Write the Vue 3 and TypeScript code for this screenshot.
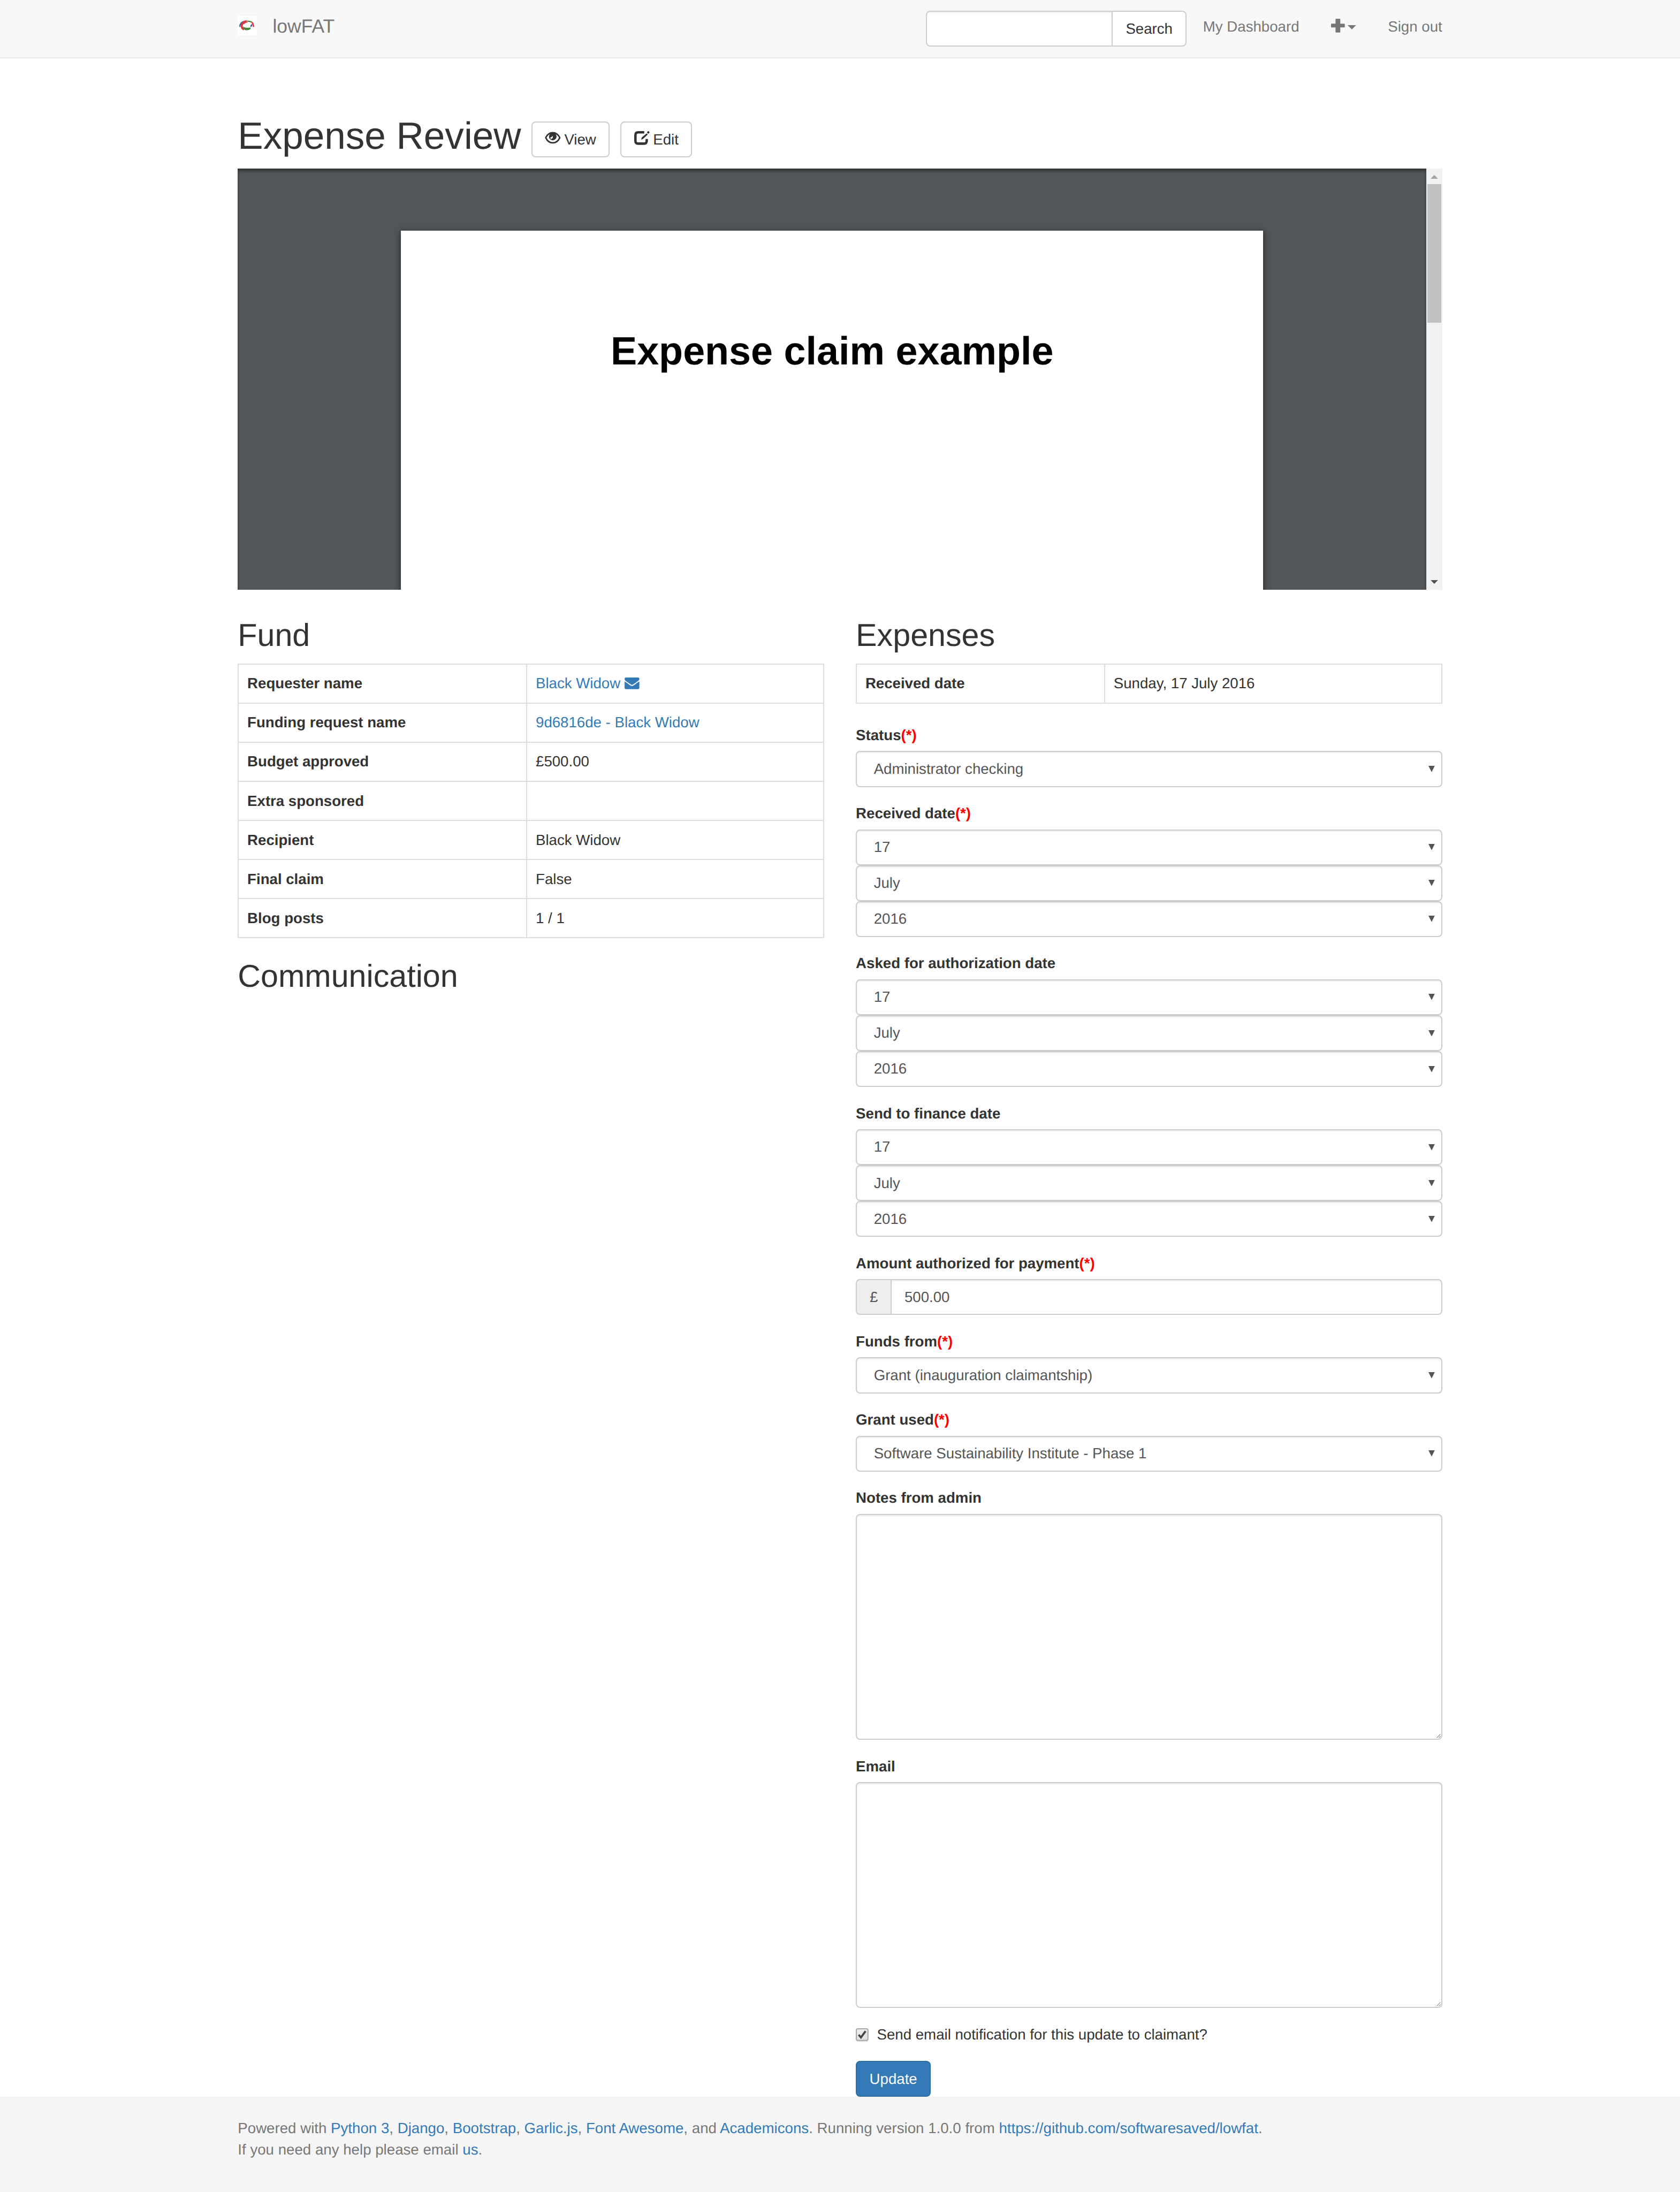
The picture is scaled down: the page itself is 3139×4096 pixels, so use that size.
<script setup lang="ts">
interface FundRow {
  label: string
  value: string
  link?: boolean
  mail?: boolean
}

interface Field {
  label: string
  required?: boolean
  kind: 'select' | 'money' | 'textarea'
  values: string[]
}

const fundRows: FundRow[] = [
  { label: 'Requester name', value: 'Black Widow', link: true, mail: true },
  { label: 'Funding request name', value: '9d6816de - Black Widow', link: true },
  { label: 'Budget approved', value: '£500.00' },
  { label: 'Extra sponsored', value: '' },
  { label: 'Recipient', value: 'Black Widow' },
  { label: 'Final claim', value: 'False' },
  { label: 'Blog posts', value: '1 / 1' },
]

const dateParts = ['17', 'July', '2016']

const fields: Field[] = [
  { label: 'Status', required: true, kind: 'select', values: ['Administrator checking'] },
  { label: 'Received date', required: true, kind: 'select', values: dateParts },
  { label: 'Asked for authorization date', kind: 'select', values: dateParts },
  { label: 'Send to finance date', kind: 'select', values: dateParts },
  { label: 'Amount authorized for payment', required: true, kind: 'money', values: ['500.00'] },
  { label: 'Funds from', required: true, kind: 'select', values: ['Grant (inauguration claimantship)'] },
  { label: 'Grant used', required: true, kind: 'select', values: ['Software Sustainability Institute - Phase 1'] },
  { label: 'Notes from admin', kind: 'textarea', values: [''] },
  { label: 'Email', kind: 'textarea', values: [''] },
]
</script>

<template>
  <div class="page">
    <nav class="navbar">
      <div class="container bar">
        <a class="brand">
          <svg class="logo" viewBox="0 0 36 36">
            <rect width="36" height="36" fill="#fff" />
            <g fill="none">
              <path d="M4.2 20.5C4 15 7.500 11 14 9.800" stroke="#2d5d9b" stroke-width="2.200" />
              <path d="M12 25.500C5 22 6 11.500 17.500 9.800" stroke="#d9343b" stroke-width="4" />
              <path d="M11.500 15.500Q14 11.800 19 11.800" stroke="#e8484c" stroke-width="1.200" />
              <path d="M18 9.800Q23 9.300 26.500 11.500" stroke="#3c8a3f" stroke-width="2.400" />
              <path d="M26.500 11.500Q30 14 30 20.500" stroke="#e8393d" stroke-width="2.800" />
              <path d="M26.800 15.500Q27 18 24.500 20" stroke="#1f5796" stroke-width="2.600" />
            </g>
            <path d="M10 19.500Q13 22.500 18 22.300L25 21.700Q24.500 26.500 18 26.800Q13 26.800 12 24.500Z" fill="#3f8a3c" />
          </svg>
          <span class="brand-name">lowFAT</span>
        </a>
        <form class="search">
          <span class="search-input"></span>
          <span class="search-button">Search</span>
        </form>
        <a class="dash">My Dashboard</a>
        <a class="add">
          <svg class="plus" viewBox="0 0 26 26">
            <path d="M9.500 0h7q1 0 1 1v8.500h7.500q1 0 1 1v5q0 1-1 1h-7.500v8.500q0 1-1 1h-7q-1 0-1-1v-8.500h-7.500q-1 0-1-1v-5q0-1 1-1h7.500v-8.500q0-1 1-1z" fill="#777" />
          </svg>
          <svg class="caret" viewBox="0 0 16 8"><path d="M0 0h16l-8 8z" fill="#777" /></svg>
        </a>
        <a>Sign out</a>
      </div>
    </nav>

    <main class="container main">
      <header class="title">
        <h1>Expense Review</h1>
        <a class="btn view">
          <svg viewBox="0 0 30 23">
            <path d="M15 1.800C8.500 1.800 4.300 6 1.700 11.500C4.300 17 8.500 21.200 15 21.200S25.700 17 28.300 11.500C25.700 6 21.500 1.800 15 1.800Z" fill="none" stroke="#333" stroke-width="2.800" stroke-linejoin="round" />
            <circle cx="15" cy="9.200" r="7.200" fill="#333" />
            <path d="M14.500 7.500Q16.500 12.500 12.500 14Q10 13.500 10 11Q13 12 14.500 7.500Z" fill="#fff" />
          </svg>
          View
        </a>
        <a class="btn edit">
          <svg viewBox="0 0 29 27">
            <path d="M19 2.300H7.500Q2.300 2.300 2.300 7.500V18.500Q2.300 23.700 7.500 23.700H18.500Q23.700 23.700 23.700 18.500V15" fill="none" stroke="#333" stroke-width="4.600" />
            <path d="M12 17.500L14 11.500L23.500 3.500L26.500 6.500L17.500 15Z" fill="#333" stroke="#fff" stroke-width="1.200" />
            <path d="M24 2.500L26 .3Q27 -.3 28.300 1Q29.300 2.300 28.500 3.200L26.500 5Z" fill="#333" />
          </svg>
          Edit
        </a>
      </header>

      <section class="viewer">
        <div class="canvas">
          <div class="sheet">Expense claim example</div>
        </div>
        <div class="scroll">
          <svg viewBox="0 0 14 7"><path d="M0 7h14l-7-7z" fill="#a3a3a3" /></svg>
          <div class="thumb"></div>
          <svg class="down" viewBox="0 0 14 7"><path d="M0 0h14l-7 7z" fill="#505050" /></svg>
        </div>
      </section>

      <div class="columns">
        <section class="col">
          <h2>Fund</h2>
          <div class="table fund">
            <div v-for="row in fundRows" :key="row.label" class="row">
              <div class="th">{{ row.label }}</div>
              <div class="td">
                <a v-if="row.link">{{ row.value }}</a>
                <template v-else>{{ row.value }}</template>
                <svg v-if="row.mail" class="mail" viewBox="0 256 1792 1408">
                  <path fill="#337ab7" d="M1792 710v794q0 66-47 113t-113 47h-1472q-66 0-113-47t-47-113v-794q44 49 101 87 362 246 497 345 57 42 92.500 65.500t94.500 48 110 24.500h2q51 0 110-24.500t94.500-48 92.500-65.500q170-123 498-345 57-39 100-87zm0-294q0 79-49 151t-122 123q-376 261-468 325-10 7-42.500 31t-54 38.500-52 32.500-57.500 27-50 9h-2q-23 0-50-9t-57.500-27-52-32.500-54-38.500-42.500-31q-91-64-262-182.500t-205-142.500q-62-42-117-115.500t-55-136.500q0-78 41.500-130t118.500-52h1472q65 0 112.500 47t47.500 113z" />
                </svg>
              </div>
            </div>
          </div>
          <h2>Communication</h2>
        </section>

        <section class="col">
          <h2>Expenses</h2>
          <div class="table received">
            <div class="row">
              <div class="th">Received date</div>
              <div class="td">Sunday, 17 July 2016</div>
            </div>
          </div>

          <div v-for="field in fields" :key="field.label" class="group">
            <div class="label">{{ field.label }}<span v-if="field.required" class="req">(*)</span></div>
            <template v-if="field.kind === 'select'">
              <div v-for="value in field.values" :key="value" class="control select">
                <span>{{ value }}</span>
                <svg viewBox="0 0 12 12"><path d="M0 0h12l-6 12z" fill="#555" /></svg>
              </div>
            </template>
            <div v-else-if="field.kind === 'money'" class="money">
              <span class="addon">£</span>
              <div class="control amount">{{ field.values[0] }}</div>
            </div>
            <div v-else class="control area">
              <svg viewBox="0 0 8 8">
                <path d="M.5 7.500L7.500 .5M4.500 7.500L7.500 4.500" stroke="#555" stroke-width="1" fill="none" />
              </svg>
            </div>
          </div>

          <div class="notify">
            <svg viewBox="0 0 24 26">
              <defs>
                <linearGradient id="boxfill" x1="0" y1="0" x2="0" y2="1">
                  <stop offset="0" stop-color="#ededed" />
                  <stop offset="1" stop-color="#dedede" />
                </linearGradient>
              </defs>
              <rect x="0" y="2" width="24" height="24" rx="4" fill="#e9e9e9" />
              <rect x="1" y="1" width="22" height="22" rx="3" fill="url(#boxfill)" stroke="#a6a6a6" stroke-width="2" />
              <path d="M5.500 12.500L9.800 17.500L18.500 5.500" fill="none" stroke="#444" stroke-width="3.800" />
            </svg>
            <span>Send email notification for this update to claimant?</span>
          </div>
          <a class="btn update">Update</a>
        </section>
      </div>
    </main>

    <footer class="footer">
      <div class="container">
        <p>
          Powered with <a>Python 3</a>, <a>Django</a>, <a>Bootstrap</a>, <a>Garlic.js</a>, <a>Font Awesome</a>, and
          <a>Academicons</a>. Running version 1.0.0 from <a>https://github.com/softwaresaved/lowfat</a>.
        </p>
        <p>If you need any help please email <a>us</a>.</p>
      </div>
    </footer>
  </div>
</template>

<style>
html,
body {
  margin: 0;
  overflow: hidden;
  background: #fff;
}
</style>

<style scoped>
.page {
  zoom: 0.987;
  display: flex;
  flex-direction: column;
  height: 4150px;
  font-family: 'Liberation Sans', Arial, sans-serif;
  font-size: 28px;
  line-height: 40px;
  color: #333;
  text-rendering: geometricPrecision;
}
.page * {
  box-sizing: border-box;
}
svg {
  display: block;
  flex: none;
  overflow: visible;
}
.container {
  width: 2280px;
  margin: 0 auto;
}
.navbar {
  flex: none;
  height: 110px;
  background: #f8f8f8;
  border-bottom: 2.1px solid #e7e7e7;
}
.bar {
  display: flex;
  align-items: flex-start;
  color: #777;
}
.bar > a {
  display: flex;
  padding-top: 30px;
  white-space: nowrap;
}
.brand {
  gap: 30px;
  font-size: 36px;
}
.logo {
  width: 36px;
  height: 36px;
}
.search {
  display: flex;
  margin: 20px 31px 0 auto;
  width: 494px;
  height: 68px;
  border: 2.1px solid #ccc;
  border-radius: 8px;
  background: #fff;
  overflow: hidden;
}
.search-input {
  flex: 1;
  box-shadow: inset 0 2px 2px rgba(0, 0, 0, 0.075);
}
.search-button {
  width: 140px;
  border-left: 2.1px solid #ccc;
  color: #333;
  line-height: 64px;
  text-align: center;
}
.dash {
  width: 242px;
}
.add {
  width: 108px;
}
.plus {
  width: 26px;
  height: 26px;
  margin-top: 5px;
}
.caret {
  width: 16px;
  height: 8px;
  margin: 18px 0 0 6px;
}
.main {
  flex: none;
  height: 3860px;
  padding-top: 108px;
}
.title {
  display: flex;
  height: 101px;
}
h1 {
  margin: 1px 20px 0 0;
  font-size: 72px;
  line-height: 80px;
  font-weight: 400;
  white-space: nowrap;
}
.btn {
  display: flex;
  height: 68px;
  border: 2.1px solid #ccc;
  border-radius: 8px;
  line-height: 64px;
}
.title .btn {
  margin-top: 12px;
}
.view {
  width: 148px;
  padding-left: 23px;
  gap: 7px;
}
.view svg {
  width: 30px;
  height: 23px;
  margin-top: 17.5px;
}
.edit {
  width: 136px;
  margin-left: 20px;
  padding-left: 24px;
  gap: 7px;
}
.edit svg {
  width: 29px;
  height: 27px;
  margin-top: 16.5px;
}
.viewer {
  display: flex;
  height: 798px;
  overflow: hidden;
}
.canvas {
  flex: 1;
  padding: 118px 309px 0;
  overflow: hidden;
  background: #525659;
  box-shadow: inset 0 5px 6px -1px rgba(0, 0, 0, 0.45);
}
.sheet {
  height: 900px;
  padding-top: 186px;
  background: #fff;
  box-shadow: 0 2px 10px 1px rgba(0, 0, 0, 0.5);
  color: #000;
  font-size: 74.67px;
  font-weight: 700;
  line-height: 84px;
  text-align: center;
}
.scroll {
  display: flex;
  flex-direction: column;
  align-items: center;
  width: 30px;
  padding: 12px 0;
  background: #f1f1f1;
}
.scroll svg {
  width: 14px;
  height: 7px;
}
.scroll .down {
  margin-top: auto;
}
.thumb {
  width: 26px;
  height: 262px;
  margin-top: 11px;
  background: #c1c1c1;
}
.columns {
  display: flex;
  gap: 60px;
  padding-top: 12px;
}
.col {
  width: 1110px;
}
h2 {
  margin: 39px 0 21px;
  font-size: 60px;
  line-height: 66px;
  font-weight: 400;
}
.col > h2:first-child {
  margin-top: 40px;
}
.table {
  margin-bottom: 40px;
  border: 2.1px solid #ddd;
  border-top: 0;
}
.fund {
  margin-bottom: 39px;
}
.row {
  display: flex;
  height: 74px;
  border-top: 2.1px solid #ddd;
}
.th,
.td {
  padding: 16px;
}
.th {
  font-weight: 700;
}
.td {
  display: flex;
  gap: 8px;
  border-left: 2.1px solid #ddd;
}
.fund .th {
  width: 544px;
}
.received .th {
  width: 468px;
}
a {
  color: #337ab7;
}
.bar a {
  color: #777;
}
.title .btn {
  color: #333;
}
.mail {
  width: 28px;
  height: 22px;
  margin-top: 9px;
}
.group {
  margin-bottom: 30px;
}
.label {
  height: 50px;
  font-weight: 700;
}
.req {
  color: #f00;
}
.control {
  display: flex;
  height: 68px;
  border: 2.1px solid #ccc;
  border-radius: 8px;
  background: #fff;
  box-shadow: inset 0 2px 2px rgba(0, 0, 0, 0.075);
  color: #555;
}
.select {
  justify-content: space-between;
  padding: 11.5px 12px 0 32px;
}
.select svg {
  width: 12px;
  height: 12px;
  margin-top: 14.5px;
}
.money {
  display: flex;
}
.addon {
  width: 66px;
  height: 68px;
  border: 2.1px solid #ccc;
  border-right: 0;
  border-radius: 8px 0 0 8px;
  background: #eee;
  color: #555;
  line-height: 64px;
  text-align: center;
}
.amount {
  flex: 1;
  border-radius: 0 8px 8px 0;
  padding: 12px 24px;
}
.area {
  height: 428px;
  align-items: flex-end;
  justify-content: flex-end;
}
.area svg {
  width: 8px;
  height: 8px;
  margin: 1px;
}
.notify {
  display: flex;
  gap: 16px;
  height: 70px;
}
.notify svg {
  width: 24px;
  height: 26px;
  margin-top: 8px;
}
.update {
  width: 142px;
  justify-content: center;
  background: #337ab7;
  border-color: #2e6da4;
  color: #fff;
}
.footer {
  flex: 1;
  padding-top: 39.5px;
  background: #f5f5f5;
  color: #777;
  letter-spacing: 0.02px;
}
.footer p {
  margin: 0;
}
</style>
